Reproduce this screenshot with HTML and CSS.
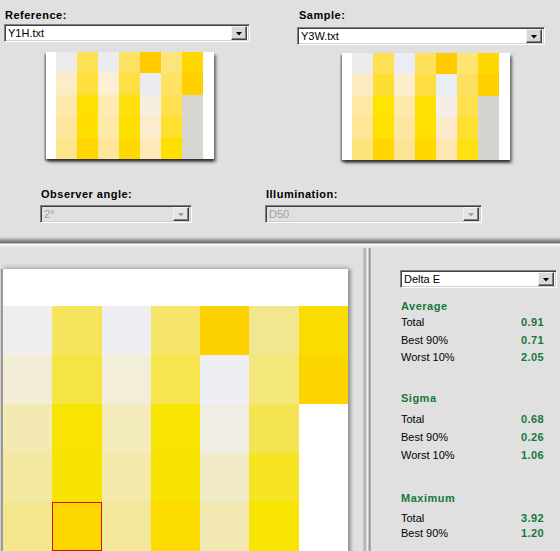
FILE: index.html
```html
<!DOCTYPE html>
<html lang="en">
<head>
    <meta charset="UTF-8">
    <title>Colour Compare</title>
    <link rel="stylesheet" href="styles.css">
</head>
<body>
    <div class="top-pane">
        <div class="sources">
            <div class="source source--ref">
                <label class="field-label">Reference:</label>
                <div class="combo combo--ref">
                    <span class="combo-text">Y1H.txt</span>
                    <span class="combo-btn"></span>
                </div>
                <div class="thumb" id="thumb-ref"></div>
            </div>
            <div class="source source--sample">
                <label class="field-label">Sample:</label>
                <div class="combo combo--sample">
                    <span class="combo-text">Y3W.txt</span>
                    <span class="combo-btn"></span>
                </div>
                <div class="thumb" id="thumb-sample"></div>
            </div>
        </div>

        <div class="options">
            <div class="option option--observer">
                <label class="field-label">Observer angle:</label>
                <div class="combo combo--disabled">
                    <span class="combo-text">2°</span>
                    <span class="combo-btn"></span>
                </div>
            </div>
            <div class="option option--light">
                <label class="field-label">Illumination:</label>
                <div class="combo combo--disabled">
                    <span class="combo-text">D50</span>
                    <span class="combo-btn"></span>
                </div>
            </div>
        </div>
    </div>

    <div class="hsplit"></div>

    <div class="bottom-pane">
        <div class="view-pane">
            <div class="canvas">
                <div class="big-grid" id="big-grid"></div>
            </div>
        </div>

        <div class="vsplit"></div>

        <div class="stats-pane">
            <div class="combo combo--metric">
                <span class="combo-text">Delta E</span>
                <span class="combo-btn"></span>
            </div>

            <div class="stats-group stats-group--avg">
                <h3 class="stats-head">Average</h3>
                <div class="stats-row"><span>Total</span><b>0.91</b></div>
                <div class="stats-row"><span>Best 90%</span><b>0.71</b></div>
                <div class="stats-row"><span>Worst 10%</span><b>2.05</b></div>
            </div>

            <div class="stats-group stats-group--sigma">
                <h3 class="stats-head">Sigma</h3>
                <div class="stats-row"><span>Total</span><b>0.68</b></div>
                <div class="stats-row"><span>Best 90%</span><b>0.26</b></div>
                <div class="stats-row"><span>Worst 10%</span><b>1.06</b></div>
            </div>

            <div class="stats-group stats-group--max">
                <h3 class="stats-head">Maximum</h3>
                <div class="stats-row"><span>Total</span><b>3.92</b></div>
                <div class="stats-row"><span>Best 90%</span><b>1.20</b></div>
            </div>
        </div>
    </div>

    <script>
        // Swatch colours, one array per column, top to bottom
        const refColors = [
            ['#ebebeb', '#fdecc8', '#fee9ac', '#fee79c', '#fee48a'],
            ['#fee154', '#fedf3c', '#ffe000', '#ffde00', '#ffd600'],
            ['#ebecf0', '#fdefd2', '#fdebb4', '#fde9a8', '#fde69c'],
            ['#fee162', '#fedf44', '#ffe00e', '#ffdf00', '#ffd800'],
            ['#ffcb00', '#ececf0', '#f6efe0', '#fdeccc', '#feeab8'],
            ['#fee57a', '#fee262', '#fee050', '#ffdf30', '#ffdf00'],
            ['#ffd800', '#ffcf00', '#d8d6d0', '#d8d6d0', '#d8d6d0']
        ];

        const sampleColors = [
            ['#ececec', '#fde9c2', '#fee8a2', '#fee694', '#fee27c'],
            ['#fee052', '#fede32', '#ffe400', '#ffe000', '#ffd400'],
            ['#ececf2', '#fdeece', '#fee9aa', '#fde7a0', '#fde494'],
            ['#fee05a', '#fede40', '#ffe000', '#ffe000', '#ffd800'],
            ['#ffcb00', '#eaedf3', '#f3efe8', '#fdeacc', '#fde6b0'],
            ['#fee472', '#fee060', '#fee050', '#ffe030', '#ffe010'],
            ['#ffd800', '#ffd000', '#d6d4ce', '#d6d4ce', '#d6d4ce']
        ];

        // Difference view (null = no patch)
        const bigColors = [
            ['#efefef', '#f3edd6', '#f2eab2', '#f2e8a2', '#f3e68c'],
            ['#f5e45c', '#f6e442', '#f8e400', '#f8e200', '#fcd700'],
            ['#eeeff2', '#f3eeda', '#f3ecba', '#f3eaaa', '#f3e89a'],
            ['#f5e56a', '#f6e54c', '#f8e402', '#f8e300', '#fbdb00'],
            ['#fdd000', '#eeeff5', '#f0ede5', '#f0ebc6', '#f2e8b2'],
            ['#f2e68e', '#f3e67a', '#f5e452', '#f6e422', '#f7e400'],
            ['#fbdc00', '#fcd400', null, null, null]
        ];

        const selected = { col: 1, row: 4 };

        function fillGrid(el, colors, cellClass, markSelected) {
            const rows = colors[0].length;
            for (let r = 0; r < rows; r++) {
                colors.forEach((column, c) => {
                    const cell = document.createElement('div');
                    cell.className = cellClass;
                    if (column[r]) {
                        cell.style.background = column[r];
                    } else {
                        cell.classList.add('is-empty');
                    }
                    if (markSelected && c === selected.col && r === selected.row) {
                        cell.classList.add('is-selected');
                    }
                    el.appendChild(cell);
                });
            }
        }

        fillGrid(document.getElementById('thumb-ref'), refColors, 'swatch', false);
        fillGrid(document.getElementById('thumb-sample'), sampleColors, 'swatch', false);
        fillGrid(document.getElementById('big-grid'), bigColors, 'patch', true);
    </script>
</body>
</html>
```

FILE: styles.css
```css
* {
    margin: 0;
    padding: 0;
    box-sizing: border-box;
}

body {
    width: 560px;
    height: 551px;
    overflow: hidden;
    font-family: 'Liberation Sans', Arial, sans-serif;
    font-size: 11px;
    color: #000;
    background-color: #e0e0e0;
}

/* ---- top pane ---- */

.top-pane {
    height: 237px;
}

.sources {
    display: flex;
}

.source--ref {
    width: 297px;
    padding: 9px 0 0 4px;
}

.source--sample {
    padding: 9px 0 0 0;
}

.field-label {
    display: block;
    font-weight: bold;
    letter-spacing: 0.5px;
    line-height: 13px;
    padding-left: 1px;
    margin-bottom: 2px;
}

.source--sample .field-label {
    padding-left: 2px;
    margin-bottom: 5px;
}

.combo {
    display: flex;
    align-items: center;
    height: 18px;
    background-color: #fff;
    border: 1px solid;
    border-color: #808080 #fff #fff #808080;
    box-shadow: inset 1px 1px 0 #404040, inset -1px -1px 0 #d4d0c8;
    padding: 2px 2px 2px 2px;
}

.combo--ref {
    width: 246px;
}

.combo--sample {
    width: 248px;
}

.combo-text {
    flex: 1;
    line-height: 13px;
    padding-left: 1px;
    padding-top: 1px;
}

.combo-btn {
    position: relative;
    width: 16px;
    height: 14px;
    background-color: #d8d8d8;
    border: 1px solid;
    border-color: #f4f4f4 #404040 #404040 #f4f4f4;
    box-shadow: inset -1px -1px 0 #808080;
    display: flex;
    align-items: center;
    justify-content: center;
}

.combo-btn::after {
    content: "";
    width: 7px;
    height: 4px;
    margin-top: 1px;
    background-color: #000;
    clip-path: polygon(0 0, 100% 0, 50% 100%);
}

.combo--disabled {
    background-color: #e0e0e0;
    color: #a0a0a0;
}

.combo--disabled .combo-btn {
    background-color: #e4e4e4;
}

.combo--disabled .combo-btn::after {
    background-color: #a0a0a0;
}

.thumb {
    width: 168px;
    height: 107px;
    padding: 0 11px 0 10px;
    background-color: #fff;
    display: grid;
    grid-template-columns: repeat(7, 1fr);
    grid-template-rows: repeat(5, 1fr);
    box-shadow: -1px 2px 2px rgba(0, 0, 0, 0.55), 2px 3px 3px rgba(0, 0, 0, 0.55);
}

.source--ref .thumb {
    margin: 10px 0 0 42px;
}

.source--sample .thumb {
    margin: 8px 0 0 45px;
}

.options {
    display: flex;
    margin-top: 28px;
}

.option--observer {
    width: 265px;
    padding-left: 40px;
}

.option--observer .combo {
    width: 152px;
}

.option--light .combo {
    width: 217px;
}

.options .field-label {
    margin-bottom: 4px;
}

/* ---- splitters ---- */

.hsplit {
    height: 11px;
    background: linear-gradient(to bottom,
        #e0e0e0 0, #b4b4b4 2px, #8a8a8a 4px, #6e6e6e 5px, #787878 6px,
        #ffffff 7px, #f4f4f4 8px, #e0e0e0 11px);
}

.bottom-pane {
    display: flex;
    height: 303px;
}

.vsplit {
    width: 7px;
    background: linear-gradient(to right,
        #d0d0d0 0, #a8a8a8 2px, #e8e8e8 4px, #f0f0f0 5px, #a0a0a0 6px, #8a8a8a 7px);
}

/* ---- difference view ---- */

.view-pane {
    width: 363px;
    padding: 21px 0 0 3px;
}

.canvas {
    width: 345px;
    height: 300px;
    background-color: #fff;
    padding-top: 37px;
    box-shadow: -2px 0 1px #9a9a9a, 3px 0 3px #9a9a9a, 0 -3px 4px rgba(0, 0, 0, 0.12);
}

.big-grid {
    display: grid;
    grid-template-columns: repeat(7, 1fr);
    grid-auto-rows: 49px;
}

.patch {
    position: relative;
}

.patch.is-selected {
    box-shadow: inset 0 0 0 1px #d81010;
}

.is-empty {
    background-color: #fff;
}

/* ---- stats ---- */

.stats-pane {
    flex: 1;
    border-left: 1px solid #b0b0b0;
    padding: 22px 0 0 30px;
}

.combo--metric {
    width: 157px;
    margin-left: -1px;
}

.stats-group {
    width: 143px;
    margin-top: 23px;
}

.stats-group--avg {
    margin-top: 10px;
}

.stats-head {
    font-size: 11px;
    font-weight: bold;
    letter-spacing: 0.5px;
    line-height: 16px;
    color: #16783a;
}

.stats-row {
    display: flex;
    justify-content: space-between;
    line-height: 17.5px;
}

.stats-row b {
    color: #16783a;
    letter-spacing: 0.4px;
}

.stats-group--sigma .stats-head {
    margin-bottom: 4px;
}

.stats-group--sigma .stats-row {
    line-height: 18px;
}

.stats-group--max {
    margin-top: 26px;
}

.stats-group--max .stats-head {
    margin-bottom: 5px;
}

.stats-group--max .stats-row {
    line-height: 15px;
}
```
